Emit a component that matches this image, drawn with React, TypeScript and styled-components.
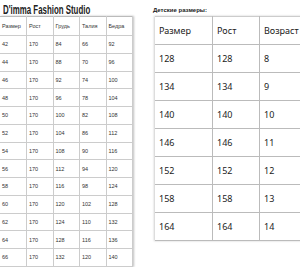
import styled, { createGlobalStyle } from 'styled-components'

const adult = [
  [42, 170, 84, 66, 92],
  [44, 170, 88, 70, 96],
  [46, 170, 92, 74, 100],
  [48, 170, 96, 78, 104],
  [50, 170, 100, 82, 108],
  [52, 170, 104, 86, 112],
  [54, 170, 108, 90, 116],
  [56, 170, 112, 94, 120],
  [58, 170, 116, 98, 124],
  [60, 170, 120, 102, 128],
  [62, 170, 124, 110, 132],
  [64, 170, 128, 116, 136],
  [66, 170, 132, 120, 140],
]

const kids = [
  [128, 128, 8],
  [134, 134, 9],
  [140, 140, 10],
  [146, 146, 11],
  [152, 152, 12],
  [158, 158, 13],
  [164, 164, 14],
]

export default function App() {
  return (
    <>
      <Global />
      <Page>
        <LeftCol>
          <TitleRow>
            <Title>D'imma Fashion Studio</Title>
          </TitleRow>
          <SmallTable>
            <thead>
              <tr>
                <SmallHead>Размер</SmallHead>
                <SmallHead>Рост</SmallHead>
                <SmallHead>Грудь</SmallHead>
                <SmallHead>Талия</SmallHead>
                <SmallHead>Бедра</SmallHead>
              </tr>
            </thead>
            <tbody>
              {adult.map((r) => (
                <tr key={r[0]}>
                  {r.map((v, i) => <SmallCell key={i}>{v}</SmallCell>)}
                </tr>
              ))}
            </tbody>
          </SmallTable>
        </LeftCol>
        <RightCol>
          <Caption>Детские размеры:</Caption>
          <KidsTable>
            <thead>
              <tr>
                <KidsCell $w={58}>Размер</KidsCell>
                <KidsCell $w={47}>Рост</KidsCell>
                <KidsCell $w={60}>Возраст</KidsCell>
              </tr>
            </thead>
            <tbody>
              {kids.map((r) => (
                <tr key={r[0]}>
                  {r.map((v, i) => <KidsCell key={i}>{v}</KidsCell>)}
                </tr>
              ))}
            </tbody>
          </KidsTable>
        </RightCol>
      </Page>
    </>
  )
}

const Global = createGlobalStyle`
  html, body {
    margin: 0;
    background: #fff;
    overflow: hidden;
  }
`

const Page = styled.div`
  display: flex;
  width: 300px;
  height: 267px;
  overflow: hidden;
`

const LeftCol = styled.div`
  width: 136px;
  flex-shrink: 0;
`

const TitleRow = styled.div`
  height: 16px;
  padding-left: 3px;
  white-space: nowrap;
`

const Title = styled.span`
  display: inline-block;
  font-family: "Liberation Sans", sans-serif;
  font-weight: bold;
  font-size: 12.5px;
  line-height: 15px;
  color: #222;
  transform: scaleX(0.63);
  transform-origin: left center;
`

const SmallTable = styled.table`
  width: 133px;
  border-collapse: collapse;
  table-layout: fixed;
  box-shadow: 1px 0 2px rgba(0, 0, 0, 0.25);
  border-top: 1px solid #bbb;
`

const SmallHead = styled.th`
  font-family: "Liberation Sans", sans-serif;
  font-weight: normal;
  font-size: 5.5px;
  color: #333;
  text-align: left;
  white-space: nowrap;
  height: 18px;
  padding: 0 2px;
  border-right: 1px solid #ccc;
  border-bottom: 1px solid #ccc;
`

const SmallCell = styled.td`
  font-family: "Liberation Sans", sans-serif;
  font-size: 5.5px;
  color: #333;
  height: 16.75px;
  padding: 0 2px;
  border-right: 1px solid #ccc;
  border-bottom: 1px solid #ccc;
`

const RightCol = styled.div`
  margin-left: 17px;
  flex-shrink: 0;
`

const Caption = styled.div`
  font-family: "Liberation Sans", sans-serif;
  font-weight: bold;
  font-size: 6px;
  color: #222;
  padding-top: 7px;
  height: 9px;
`

const KidsTable = styled.table`
  margin-left: 2px;
  border-collapse: collapse;
  table-layout: fixed;
  box-shadow: -1px 0 2px rgba(0, 0, 0, 0.2);
  border-top: 1px solid #ccc;
`

const KidsCell = styled.td<{ $w?: number }>`
  font-family: "Noto Sans", "Open Sans", sans-serif;
  font-size: 9px;
  color: #222;
  width: ${(p) => (p.$w ? `${p.$w - 5}px` : 'auto')};
  height: 27px;
  padding: 0 0 0 4px;
  border-right: 1px solid #bbb;
  border-bottom: 1px solid #bbb;
`
